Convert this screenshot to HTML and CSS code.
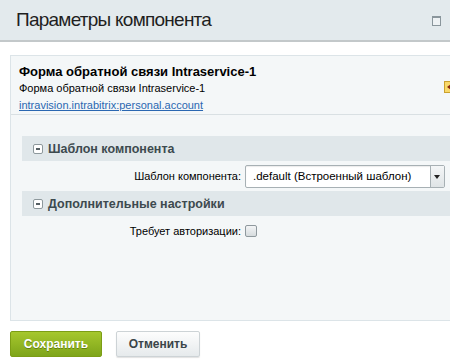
FILE: index.html
```html
<!DOCTYPE html>
<html lang="ru">
<head>
<meta charset="utf-8">
<title>Параметры компонента</title>
<link rel="stylesheet" href="styles.css">
</head>
<body>
<div class="dialog">
  <div class="titlebar">
    <h1 class="title">Параметры компонента</h1>
    <span class="max-btn"></span>
  </div>
  <div class="content">
    <div class="panel">
      <div class="panel-head">
        <div class="comp-name">Форма обратной связи Intraservice-1</div>
        <div class="comp-desc">Форма обратной связи Intraservice-1</div>
        <a class="comp-link" href="#">intravision.intrabitrix:personal.account</a>
        <span class="help-icon"></span>
      </div>
      <div class="panel-body">
        <div class="section">
          <div class="section-head"><span class="toggle"></span>Шаблон компонента</div>
          <div class="row">
            <label class="row-label">Шаблон компонента:</label>
            <div class="select">
              <span class="select-text">.default (Встроенный шаблон)</span>
              <span class="select-arrow"></span>
            </div>
          </div>
        </div>
        <div class="section">
          <div class="section-head"><span class="toggle"></span>Дополнительные настройки</div>
          <div class="row">
            <label class="row-label">Требует авторизации:</label>
            <span class="checkbox"></span>
          </div>
        </div>
      </div>
    </div>
    <div class="buttons">
      <button class="btn btn-save">Сохранить</button>
      <button class="btn btn-cancel">Отменить</button>
    </div>
  </div>
</div>
</body>
</html>
```
FILE: styles.css
```css
html, body {
  margin: 0;
  padding: 0;
  background: #fff;
  overflow: hidden;
}
body {
  font-family: "Liberation Sans", Arial, sans-serif;
  color: #000;
  width: 450px;
  height: 364px;
}
.titlebar {
  height: 40px;
  background: #e3eaed;
  border-bottom: 2px solid #c3c8ca;
  display: flex;
  align-items: center;
  position: relative;
}
.title {
  margin: 0 0 0 16px;
  font-weight: normal;
  font-size: 19px;
  color: #1f1f1f;
  letter-spacing: -0.75px;
}
.max-btn {
  position: absolute;
  right: 9px;
  top: 16px;
  width: 7px;
  height: 7px;
  border: 1px solid #8a969c;
  border-top-width: 2px;
  background: #eef2f4;
}
.content {
  padding: 13px 0 0 10px;
}
.panel {
  width: 460px;
  border: 1px solid #dce4e8;
  background: #f4f7f8;
  height: 264px;
}
.panel-head {
  position: relative;
  padding: 8px 8px 8px 8px;
  border-bottom: 1px solid #d9e0e3;
  height: 42px;
}
.comp-name {
  font-weight: bold;
  font-size: 13px;
  line-height: 16px;
  color: #000;
}
.comp-desc {
  margin-top: 2px;
  font-size: 11px;
  line-height: 13px;
  color: #000;
}
.comp-link {
  font-size: 11px;
  line-height: 13px;
  color: #2a67b1;
  text-decoration: underline;
}
.help-icon {
  position: absolute;
  left: 433px;
  top: 25px;
  width: 10px;
  height: 10px;
  border: 1px solid #caa12e;
  background: #f9d96a;
}
.help-icon::after {
  content: "";
  position: absolute;
  left: 2px;
  top: 2px;
  border-top: 3px solid transparent;
  border-bottom: 3px solid transparent;
  border-right: 4px solid #8a2a10;
}
.panel-body {
  padding: 21px 0 0 11px;
}
.section-head {
  height: 25px;
  background: #e0e7ea;
  display: flex;
  align-items: center;
  padding-left: 11px;
  font-weight: bold;
  font-size: 12.5px;
  color: #3d4a4f;
}
.toggle {
  width: 8px;
  height: 8px;
  border: 1px solid #8d989c;
  border-radius: 2px;
  background: #fff;
  margin-right: 5px;
  position: relative;
}
.toggle::after {
  content: "";
  position: absolute;
  left: 2px;
  top: 3px;
  width: 4px;
  height: 2px;
  background: #555f63;
}
.row {
  display: flex;
  align-items: center;
  height: 30px;
}
.row-label {
  width: 219px;
  text-align: right;
  font-size: 11px;
  color: #000;
  padding-right: 4px;
}
.select {
  width: 198px;
  height: 21px;
  border: 1px solid #a7b0b4;
  border-radius: 2px;
  background: #fff;
  display: flex;
  align-items: center;
  position: relative;
  box-shadow: inset 0 1px 1px rgba(0,0,0,0.08);
}
.select-text {
  font-size: 11.5px;
  color: #000;
  padding-left: 7px;
}
.select-arrow {
  position: absolute;
  right: 0;
  top: 0;
  width: 13px;
  height: 21px;
  border-left: 1px solid #a7b0b4;
  background: linear-gradient(#f4f6f7, #dfe4e6);
}
.select-arrow::after {
  content: "";
  position: absolute;
  left: 3px;
  top: 9px;
  border-left: 3px solid transparent;
  border-right: 3px solid transparent;
  border-top: 4px solid #222;
}
.checkbox {
  width: 10px;
  height: 10px;
  border: 1px solid #8f999e;
  border-radius: 2px;
  background: linear-gradient(#f3f5f6, #d6dcde);
}
.buttons {
  display: flex;
  gap: 14px;
  padding-top: 10px;
}
.btn {
  height: 26px;
  font-family: "Liberation Sans", Arial, sans-serif;
  font-weight: bold;
  font-size: 12px;
  border-radius: 2px;
  padding: 0;
}
.btn-save {
  width: 92px;
  border: 1px solid #7c9d15;
  background: linear-gradient(#a6c72d, #7ea51a);
  color: #fff;
  text-shadow: 0 1px 0 rgba(60,80,0,0.5);
}
.btn-cancel {
  width: 84px;
  border: 1px solid #cdd3d6;
  background: linear-gradient(#fdfdfd, #e6eaec);
  color: #3a4448;
  box-shadow: 0 1px 1px rgba(0,0,0,0.12);
}
```
